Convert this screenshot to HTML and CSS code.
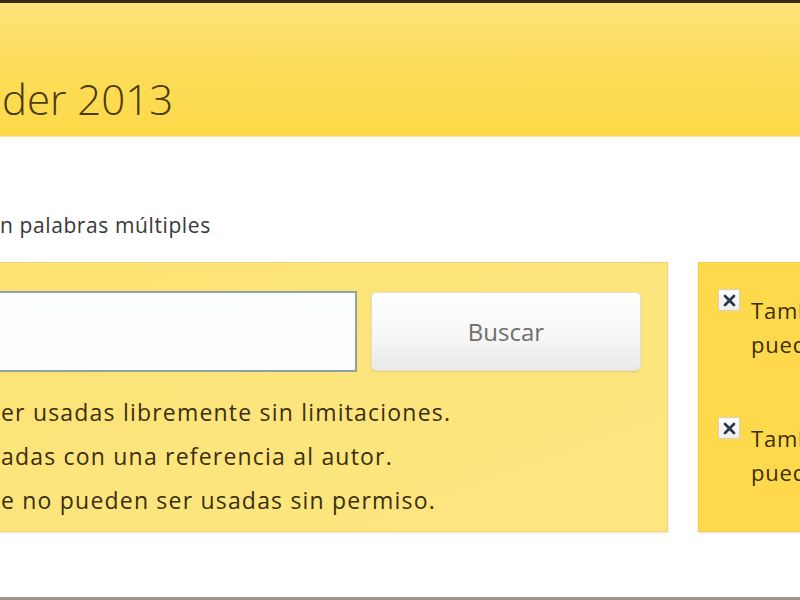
FILE: index.html
```html
<!DOCTYPE html>
<html lang="es">

<head>
    <meta charset="UTF-8">
    <meta name="viewport" content="width=device-width, initial-scale=1.0">
    <title>Clip Art Finder 2013</title>
    <link rel="stylesheet" href="styles.css">
</head>

<body>
    <div class="topbar"></div>
    <header class="header">
        <h1 class="title"><span class="cut"><span>Clip Art Fin</span></span>der 2013</h1>
    </header>

    <main class="main">
        <p class="hint"><span class="cut"><span>Buscar imágenes co</span></span>n palabras múltiples</p>

        <div class="panels">
            <section class="search-box">
                <div class="search-row">
                    <input type="text" class="search-input" id="query">
                    <button type="button" class="search-button">Buscar</button>
                </div>
                <ul class="legend">
                    <li><span class="cut"><span>Verde: imágenes que pueden s</span></span>er usadas libremente sin limitaciones.</li>
                    <li><span class="cut"><span>Amarillo: imágenes que pueden ser us</span></span>adas con una referencia al autor.</li>
                    <li><span class="cut"><span>Rojo: imágenes qu</span></span>e no pueden ser usadas sin permiso.</li>
                </ul>
            </section>

            <aside class="options">
                <label class="option">
                    <span class="check">
                        <svg viewBox="0 0 20 20" width="15" height="15">
                            <path d="M4 4 L16 16 M16 4 L4 16" stroke="#27364a" stroke-width="3.6" stroke-linecap="round" />
                        </svg>
                    </span>
                    <span class="option-text">También buscar en Flickr<br>pueden ser usadas</span>
                </label>
                <label class="option">
                    <span class="check">
                        <svg viewBox="0 0 20 20" width="15" height="15">
                            <path d="M4 4 L16 16 M16 4 L4 16" stroke="#27364a" stroke-width="3.6" stroke-linecap="round" />
                        </svg>
                    </span>
                    <span class="option-text">También buscar en Wikimedia<br>pueden ser usadas</span>
                </label>
            </aside>
        </div>
    </main>

    <div class="footer-line"></div>
</body>

</html>
```

FILE: styles.css
```css
* {
    box-sizing: border-box;
    margin: 0;
    padding: 0;
}

html,
body {
    overflow: hidden;
}

body {
    height: 100vh;
    display: flex;
    flex-direction: column;
    background: #fff;
    font-family: "Open Sans", "Noto Sans", sans-serif;
    color: #3a2f10;
}

/* zero-width box: the start of a line runs off the left edge */
.cut {
    display: inline-flex;
    width: 0;
    justify-content: flex-end;
    white-space: nowrap;
}

.topbar {
    height: 3px;
    background: #3a2b14;
}

.header {
    height: 134px;
    padding-top: 71px;
    background: linear-gradient(180deg, #fce47c 0%, #fddd5c 45%, #fdd948 100%);
    border-bottom: 1px solid #f6e7a6;
}

.title {
    padding-left: 2px;
    font-size: 42px;
    font-weight: 300;
    line-height: 50px;
    color: #4a3a0c;
    white-space: nowrap;
}

.main {
    flex: 1;
    padding-top: 74px;
}

.hint {
    font-size: 21px;
    line-height: 28px;
    letter-spacing: 0.6px;
    color: #383838;
    white-space: nowrap;
}

.panels {
    display: flex;
    gap: 30px;
    margin-top: 23px;
}

.search-box {
    flex: 0 0 728px;
    height: 270px;
    margin-left: -60px;
    padding: 28px 26px 0 60px;
    background: linear-gradient(160deg, #fde26e 0%, #fde57d 50%, #fde680 100%);
    border: 1px solid #eed47c;
    box-shadow: 0 1px 2px rgba(160, 130, 40, 0.25);
}

.search-row {
    display: flex;
    align-items: center;
    gap: 14px;
}

.search-input {
    flex: 1;
    height: 81px;
    margin-left: -20px;
    border: 2px solid #8fa3a6;
    background: #fdfefe;
    outline: none;
}

.search-button {
    flex: 0 0 270px;
    height: 79px;
    border: 1px solid #e6e0cc;
    border-radius: 5px;
    background: linear-gradient(180deg, #ffffff 0%, #f7f7f7 55%, #e9e9e9 100%);
    box-shadow: 0 1px 2px rgba(0, 0, 0, 0.12);
    font-family: "Open Sans", "Noto Sans", sans-serif;
    font-size: 24px;
    color: #6e6e6e;
}

.legend {
    list-style: none;
    margin-top: 18px;
    font-size: 23px;
    line-height: 44px;
    letter-spacing: 1.2px;
    white-space: nowrap;
}

.options {
    flex: 0 0 300px;
    height: 270px;
    padding: 26px 0 0 19px;
    background: #fdd94b;
    border: 1px solid #efcf55;
    box-shadow: 0 1px 2px rgba(160, 130, 40, 0.25);
    display: flex;
    flex-direction: column;
    gap: 56px;
}

.option {
    display: flex;
    align-items: flex-start;
    gap: 11px;
}

.check {
    flex: 0 0 22px;
    height: 22px;
    display: flex;
    align-items: center;
    justify-content: center;
    border: 1px solid #d8d3b4;
    background: linear-gradient(180deg, #ffffff 0%, #eeeeee 100%);
}

.option-text {
    padding-top: 4px;
    font-size: 22px;
    line-height: 34px;
    letter-spacing: 0.8px;
    white-space: nowrap;
}

.footer-line {
    height: 3px;
    background: #9d968c;
}
```
